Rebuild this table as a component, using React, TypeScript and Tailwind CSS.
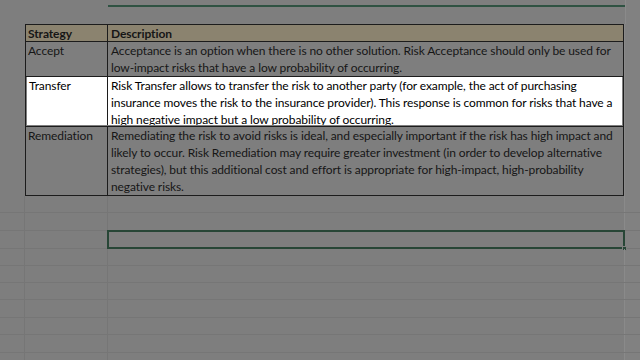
import React from "react"

const rows = [
  {
    name: "Accept",
    h: "h-[35px]",
    lines: [
      "Acceptance is an option when there is no other solution. Risk Acceptance should only be used for",
      "low-impact risks that have a low probability of occurring.",
    ],
  },
  {
    name: "Transfer",
    h: "h-[50px]",
    lit: true,
    lines: [
      "Risk Transfer allows to transfer the risk to another party (for example, the act of purchasing",
      "insurance moves the risk to the insurance provider). This response is common for risks that have a",
      "high negative impact but a low probability of occurring.",
    ],
  },
  {
    name: "Remediation",
    h: "h-[68px]",
    lines: [
      "Remediating the risk to avoid risks is ideal, and especially important if the risk has high impact and",
      "likely to occur. Risk Remediation may require greater investment (in order to develop alternative",
      "strategies), but this additional cost and effort is appropriate for high-impact, high-probability",
      "negative risks.",
    ],
  },
]

function GridRow({ h, children }: { h: string; children?: React.ReactNode }) {
  return (
    <div className={`flex ${h} border-b border-[#767676]`}>
      <div className="w-[25px] shrink-0 border-r border-[#767676]" />
      <div className="w-[83px] shrink-0 border-r border-[#767676]" />
      <div className="w-[517px] shrink-0 relative border-r border-[#8a8a8a]">{children}</div>
      <div className="flex-1 bg-[#818181]" />
    </div>
  )
}

export default function App() {
  return (
    <div className="w-[640px] h-[360px] overflow-hidden bg-[#7e7e7e] text-[#161616] font-['Lato',sans-serif] text-[12px] tracking-[-0.1px] leading-[17px]">
      {/* rows above the table */}
      <div className="flex h-[7px]">
        <div className="w-[108px] shrink-0" />
        <div className="w-[517px] shrink-0 border-b-2 border-[#2f5242]" />
        <div className="flex-1 bg-[#818181] border-l border-[#8a8a8a]" />
      </div>
      <div className="flex h-[17px]">
        <div className="w-[625px] shrink-0" />
        <div className="flex-1 bg-[#818181] border-l border-[#8a8a8a]" />
      </div>

      {/* table */}
      <div className="flex">
        <div className="w-[25px] shrink-0" />
        <div className="w-[599px] shrink-0 border border-[#1c1c1c]">
          <div className="flex h-[17px] bg-[#8b836f] border-b border-[#1c1c1c] font-bold">
            <div className="w-[82px] shrink-0 border-r border-[#1c1c1c] pl-[2px] leading-[17px]">Strategy</div>
            <div className="flex-1 pl-[3px] leading-[17px]">Description</div>
          </div>
          {rows.map((r, i) => (
            <div
              key={r.name}
              className={`${r.h} ${i < rows.length - 1 ? "border-b border-[#1c1c1c]" : ""} ${r.lit ? "px-[1px] pb-[1px]" : ""}`}
            >
              <div className={`flex h-full overflow-hidden ${r.lit ? "bg-white text-black" : ""}`}>
                <div className={`${r.lit ? "w-[81px]" : "w-[82px]"} shrink-0 border-r border-[#1c1c1c] pl-[2px] whitespace-nowrap`}>
                  {r.name}
                </div>
                <div className="flex-1 pl-[3px] whitespace-nowrap overflow-hidden">
                  {r.lines.map((l) => (
                    <div key={l}>{l}</div>
                  ))}
                </div>
              </div>
            </div>
          ))}
        </div>
        <div className="flex-1 bg-[#818181] border-l border-[#8a8a8a]" />
      </div>

      {/* empty rows below */}
      <GridRow h="h-[17px]" />
      <GridRow h="h-[18px]" />
      <GridRow h="h-[18px]">
        <div className="absolute -left-[1px] -top-[1px] w-[518px] h-[19px] border-2 border-[#274636]" />
        <div className="absolute -right-[3px] bottom-[-3px] w-[5px] h-[5px] bg-[#274636] border border-[#7e7e7e]" />
      </GridRow>
      <GridRow h="h-[17px]" />
      <GridRow h="h-[17px]" />
      <GridRow h="h-[17px]" />
      <GridRow h="h-[18px]" />
      <GridRow h="h-[17px]" />
      <GridRow h="h-[18px]" />
      <GridRow h="h-[17px]" />
    </div>
  )
}
